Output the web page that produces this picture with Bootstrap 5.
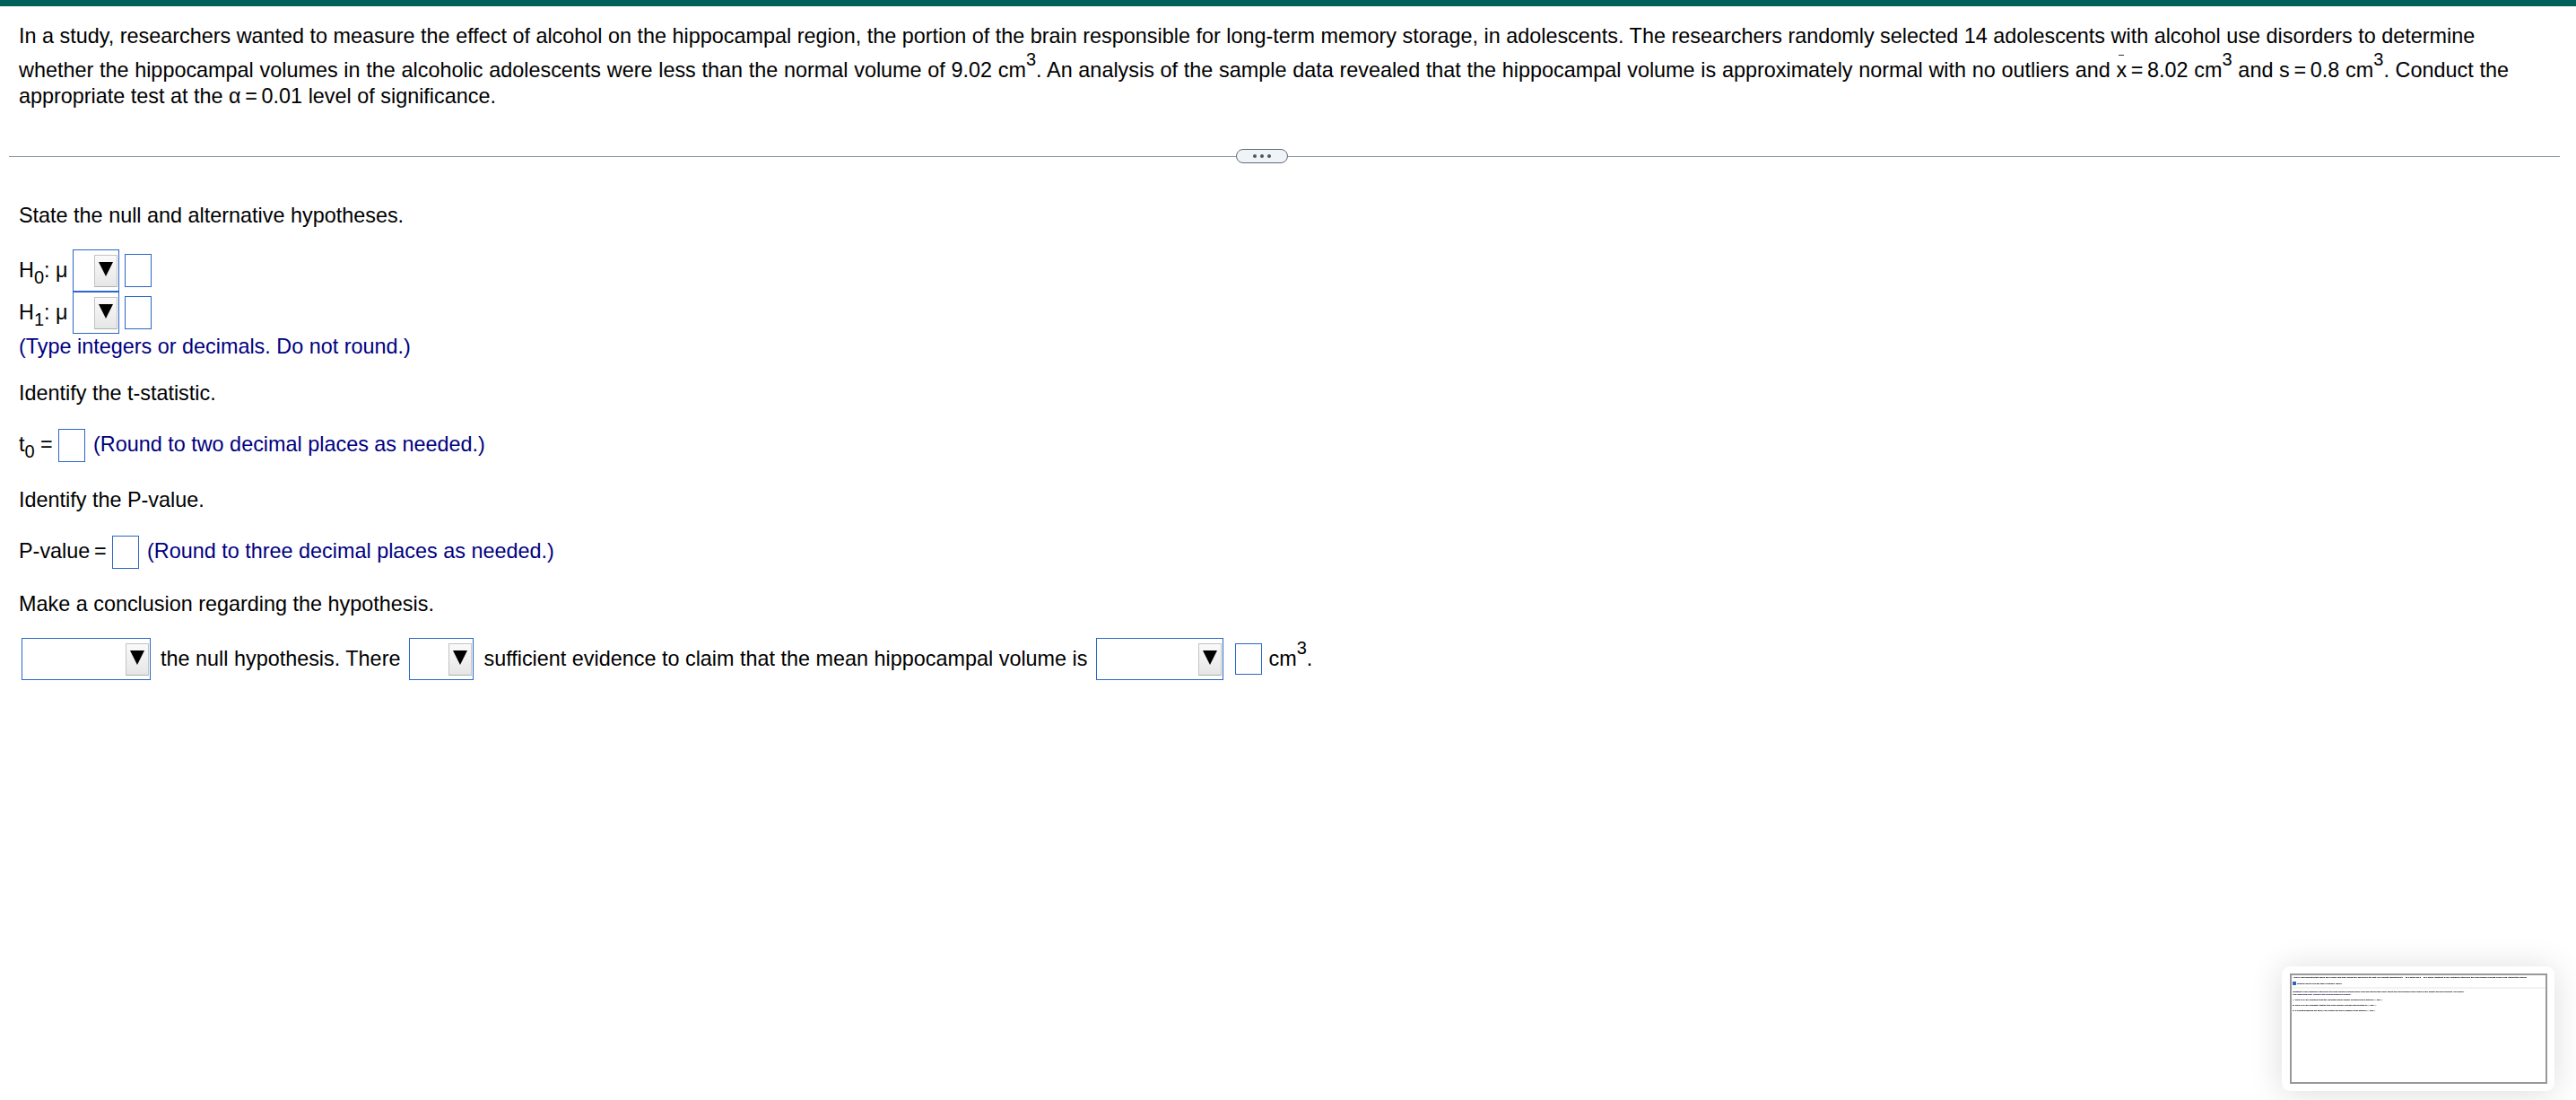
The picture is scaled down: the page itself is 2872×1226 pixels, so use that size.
<!DOCTYPE html>
<html lang="en">
<head>
<meta charset="utf-8">
<title>Hypothesis test</title>
<link href="https://cdn.jsdelivr.net/npm/bootstrap@5.3.0/dist/css/bootstrap.min.css" rel="stylesheet">
<style>
html,body{height:100%;margin:0}
body{font-family:"Liberation Sans",Arial,sans-serif;font-size:23.4px;line-height:28px;color:#000;background:#fff;position:relative;overflow:hidden}
.topstrip{height:7px;background:#00605a;border-bottom:0}
.sheet{padding:19px 0 0 21px}
.qline{white-space:nowrap;height:28px}
.gap10{margin-top:10px;word-spacing:.22px}
.gap1{margin-top:1px}
sup.pw{font-size:20px;top:-13px;line-height:0;vertical-align:baseline;position:relative}
sub.ix{font-size:20px;bottom:-7px;line-height:0;vertical-align:baseline;position:relative}
.xbar{position:relative;display:inline-block}
.xbar::before{content:"";position:absolute;left:3px;right:3px;top:-3px;height:1px;background:#333}
.splitter{margin:45px 18px 0 -11px;height:16px}
.splitline{height:1px;background:#8a94a6;flex:1 1 auto}
.splitline.first{flex:0 0 1368px}
.grip{width:58px;height:16px;border:1px solid #5d6b7e;border-radius:8px;background:#f1f4f7;gap:4px}
.grip i{display:block;width:4px;height:4px;border-radius:50%;background:#4c5563}
.s1{margin-top:44px}
.s2{margin-top:25px}
.s3{margin-top:26px}
.s4{margin-top:28px}
.s5{margin-top:24px}
.s1b{margin-top:24px}
.afternote{margin-top:24px}
.nowrapline{white-space:nowrap}
.ctl{height:47px}
.ctlb{height:37px}
.lab{padding-top:9px}
.lab3{padding-top:3px}
.w60{width:60px}
.w44{width:44px}
.w104{width:104px}
.pick{height:47px;border:1px solid #2c66c9;background:#fff;padding:5px 1px 0 0;flex:none}
.pick.p52{width:52px}
.pick.p144{width:144px;margin-left:3px}
.pick.p72{width:72px}
.pick.p142{width:142px}
.pickbtn{width:26px;height:36px;border:1px solid #c4c4c4;border-bottom-color:#b0b0b0;background:linear-gradient(#fafafa,#e6e6e6);padding-top:7px}
.pickbtn svg{display:block;width:16px;height:16px}
.box{width:30px;height:37px;border:1px solid #2c66c9;background:#fff;flex:none}
.box.m5{margin-top:5px;margin-left:6px}
.box.m6{margin-top:6px;margin-left:13px;height:35px}
.hint{color:#000080}
.ms9{margin-left:9px}
.ms11{margin-left:11px}
.ms10{margin-left:10px}
.t9{padding-top:9px}
.cm{margin-left:8px}
.thumb{right:24px;bottom:10px;width:304px;height:139px;padding:8px 8px 8px 9px;border-radius:9px;box-shadow:0 2px 36px rgba(0,0,0,.14)}
.thumbframe{height:123px;border:2px solid #999;overflow:hidden;font-size:2.3px;line-height:3px;white-space:nowrap;padding:1px 1px;filter:blur(.25px);color:#000;text-shadow:0 0 .6px #000}
.tico{width:4px;height:4px;background:#2a63c4;margin-right:1px}
.tbar{height:2px;background:#f2f2f2;margin:2px -1px 2px}
.tnote{color:#000080}
.tsp{margin-top:3px}
</style>
</head>
<body>
<div class="topstrip"></div>
<main class="sheet">
  <div class="qline">In a study, researchers wanted to measure the effect of alcohol on the hippocampal region, the portion of the brain responsible for long-term memory storage, in adolescents. The researchers randomly selected 14 adolescents with alcohol use disorders to determine</div>
  <div class="qline gap10">whether the hippocampal volumes in the alcoholic adolescents were less than the normal volume of 9.02 cm<sup class="pw">3</sup>. An analysis of the sample data revealed that the hippocampal volume is approximately normal with no outliers and <span class="xbar">x</span>&thinsp;=&thinsp;8.02 cm<sup class="pw">3</sup> and s&thinsp;=&thinsp;0.8 cm<sup class="pw">3</sup>. Conduct the</div>
  <div class="qline gap1">appropriate test at the α&thinsp;=&thinsp;0.01 level of significance.</div>

  <div class="splitter d-flex align-items-center">
    <div class="splitline first"></div>
    <div class="grip d-flex align-items-center justify-content-center flex-none"><i></i><i></i><i></i></div>
    <div class="splitline"></div>
  </div>

  <div class="qline s1">State the null and alternative hypotheses.</div>
  <div class="d-flex align-items-start ctl s1b">
    <div class="lab w60 nowrapline">H<sub class="ix">0</sub>: μ</div>
    <div class="pick p52 d-flex justify-content-end"><div class="pickbtn d-flex justify-content-center"><svg viewBox="0 0 16 16"><polygon points="0,0 16,0 8,16" fill="#000"/></svg></div></div>
    <div class="box m5"></div>
  </div>
  <div class="d-flex align-items-start ctl">
    <div class="lab w60 nowrapline">H<sub class="ix">1</sub>: μ</div>
    <div class="pick p52 d-flex justify-content-end"><div class="pickbtn d-flex justify-content-center"><svg viewBox="0 0 16 16"><polygon points="0,0 16,0 8,16" fill="#000"/></svg></div></div>
    <div class="box m5"></div>
  </div>
  <div class="qline hint">(Type integers or decimals. Do not round.)</div>

  <div class="qline afternote">Identify the t-statistic.</div>
  <div class="d-flex align-items-start ctlb s3">
    <div class="lab3 w44 nowrapline">t<sub class="ix">0</sub> =</div>
    <div class="box"></div>
    <div class="lab3 hint ms9 nowrapline">(Round to two decimal places as needed.)</div>
  </div>

  <div class="qline s4">Identify the P-value.</div>
  <div class="d-flex align-items-start ctlb s3">
    <div class="lab3 w104 nowrapline">P-value&thinsp;=</div>
    <div class="box"></div>
    <div class="lab3 hint ms9 nowrapline">(Round to three decimal places as needed.)</div>
  </div>

  <div class="qline s2">Make a conclusion regarding the hypothesis.</div>
  <div class="d-flex align-items-start ctl s5 nowrapline">
    <div class="pick p144 d-flex justify-content-end"><div class="pickbtn d-flex justify-content-center"><svg viewBox="0 0 16 16"><polygon points="0,0 16,0 8,16" fill="#000"/></svg></div></div>
    <div class="t9 ms11">the null hypothesis. There</div>
    <div class="pick p72 d-flex justify-content-end ms10"><div class="pickbtn d-flex justify-content-center"><svg viewBox="0 0 16 16"><polygon points="0,0 16,0 8,16" fill="#000"/></svg></div></div>
    <div class="t9 ms11">sufficient evidence to claim that the mean hippocampal volume is</div>
    <div class="pick p142 d-flex justify-content-end ms9"><div class="pickbtn d-flex justify-content-center"><svg viewBox="0 0 16 16"><polygon points="0,0 16,0 8,16" fill="#000"/></svg></div></div>
    <div class="box m6"></div>
    <div class="t9 cm">cm<sup class="pw">3</sup>.</div>
  </div>
</main>

<aside class="thumb position-absolute bg-white">
  <div class="thumbframe">
    <div>A survey was conducted that asked 1014 people how many books they had read in the past year. Results indicated that x = 11.1 books and s = 16.6 books. Construct a 95% confidence interval for the mean number of books people read. Interpret the interval.</div>
    <div class="d-flex align-items-center tsp"><span class="tico"></span>Click the icon to view the table of critical t-values.</div>
    <div class="tbar"></div>
    <div>Construct a 95% confidence interval for the mean number of books people read and interpret the result. Select the correct choice below and fill in the answer boxes to complete your choice.</div>
    <div class="tnote">(Use ascending order. Round to two decimal places as needed.)</div>
    <div class="tsp">A. There is a 95% confidence that the population mean number of books read is between ▢ and ▢.</div>
    <div class="tsp">B. There is a 95% probability that the true mean number of books read is between ▢ and ▢.</div>
    <div class="tsp">C. If repeated samples are taken, 95% of them will have a sample mean between ▢ and ▢.</div>
  </div>
</aside>
</body>
</html>
